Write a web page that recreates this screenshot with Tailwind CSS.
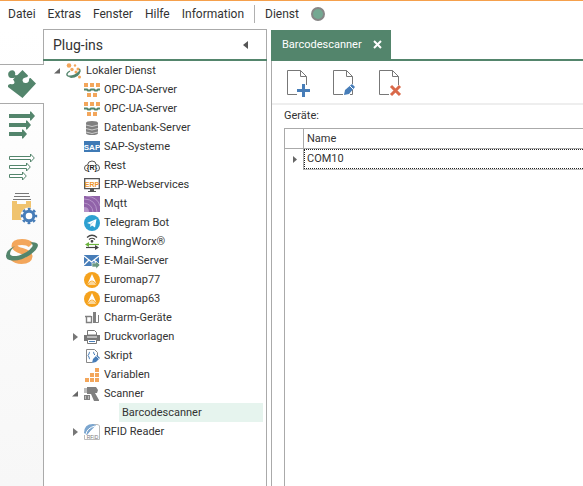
<!DOCTYPE html>
<html lang="de">
<head>
<meta charset="utf-8">
<title>Plug-ins</title>
<script src="https://cdn.jsdelivr.net/npm/@tailwindcss/browser@4"></script>
</head>
<body class="flex min-h-screen flex-col overflow-hidden border-t border-[#f5a04c] bg-white font-[Roboto,'Liberation_Sans',sans-serif] text-[11px] leading-[18px] text-[#333]">
<nav class="flex h-7 shrink-0 items-center gap-3 pb-[2px] pl-2 text-[12px]" aria-label="Hauptmenü">
  <button>Datei</button><button>Extras</button><button>Fenster</button><button>Hilfe</button><button>Information</button>
  <span class="-mx-[2px] h-[18px] w-px bg-[#b0b0b0]"></span>
  <button>Dienst</button>
  <span class="h-[14px] w-[14px] rounded-full border-2 border-[#868686] bg-[#74a892]"></span>
</nav>
<div class="flex flex-1">
  <aside class="flex w-[43px] shrink-0 flex-col bg-linear-to-b from-white to-[#f7f7f7] pt-[35px]">
    <button aria-label="Plug-ins" class="relative z-10 -mr-px flex h-10 items-center justify-center border-y border-[#aaa] bg-white">
      <svg width="28" height="28" viewBox="0 0 28 28" fill="#53856c"><path d="M14.500 0L20 5.500Q20 7.500 17.500 7.500Q14.500 8 14.500 10.500Q15 13.500 18 13Q21 12.500 21 10Q21 7.500 22.500 8L28 13.500 14.500 28 0 17Q-.5 14 2.500 14Q6.500 15 6.500 12.500Q6.500 11 5 9.500L7 7.500Q4 8.500 1.500 7.500Q-.5 5.500 .5 2.500Q2.500-.5 5.500 .5Q8 2 7 5Q9 6 10.500 4Z"/></svg>
    </button>
    <button aria-label="Ausgänge" class="flex h-[42px] items-center justify-center">
      <svg width="26" height="28" viewBox="0 0 26 28" fill="#53856c"><path d="M0 3H21V.5h1L26 5 22 9.500h-1V7H0zM0 12H17V9.500h1L22 14 18 18.500h-1V16H0zM0 21H13V18.500h1L18 23 14 27.500h-1V25H0z"/></svg>
    </button>
    <button aria-label="Eingänge" class="flex h-[42px] items-center justify-center">
      <svg width="26" height="28" viewBox="0 0 26 28" fill="#fff" stroke="#53856c"><path d="M.5 3.500H21.500V1L25.300 5 21.500 9V6.500H.5zM.5 12.500H17.500V10L21.300 14 17.500 18V15.500H.5zM.5 21.500H13.500V19L17.300 23 13.500 27V24.500H.5z"/></svg>
    </button>
    <button aria-label="Konfiguration" class="flex h-[42px] items-center justify-center pl-[6px]">
      <svg width="26" height="32" viewBox="0 0 26 32"><path d="M3 .5H17M2 3.500H18M1 6.500H19" stroke="#777" fill="none"/><path d="M0 8H5V11H14V8H19V27H0z" fill="#f0c36e"/><circle cx="17" cy="23" r="8.500" fill="#fcfcfc"/><circle cx="17" cy="23" r="4.800" fill="#fff" stroke="#477db8" stroke-width="3"/><circle cx="17" cy="23" r="7" fill="none" stroke="#477db8" stroke-width="2.400" stroke-dasharray="2.750 2.748" stroke-dashoffset="1.400"/></svg>
    </button>
    <button aria-label="Dienst" class="flex h-[42px] items-center justify-center">
      <svg width="32" height="27" viewBox="0 0 32 27" fill="none"><path d="M25 7Q22 4 16 4Q8.500 4 8.500 8Q9 11 16 13Q23.500 15 23.500 18.500Q23 23 15.500 23Q10 23 7 20" stroke="#f3a65b" stroke-width="6"/><path d="M9 8Q0 12 0 18Q0 22 6 22.500Q15 23 24 17Q32 11 32 7Q31 3.500 24 4.500Q28 6 26 9Q22 14.500 13 17.500Q5 19 4 16Q4 12 9 8Z" fill="#53856c"/></svg>
    </button>
  </aside>

  <section class="flex w-56 shrink-0 flex-col border-x border-t border-[#aaa]">
    <header class="-mx-px flex h-[31px] shrink-0 items-center justify-between border-b-2 border-[#53856c] pr-[19px] pl-[10px]">
      <h2 class="text-[14px]">Plug-ins</h2>
      <button aria-label="Einklappen"><svg width="5" height="8" viewBox="0 0 5 8" fill="#555"><path d="M5 0V8L0 4z"/></svg></button>
    </header>
    <ul class="pl-1 [&_button]:flex [&_button]:h-[19px] [&_button]:items-center [&_button]:gap-1 [&_button]:whitespace-nowrap [&_svg]:shrink-0">
      <li><button class="pl-[6px]"><svg class="mr-px" width="7" height="7" viewBox="0 0 7 7" fill="#666"><path d="M6 1V6.500H0z"/></svg>
        <svg width="16" height="16" viewBox="0 0 16 16"><g fill="#f3a65b"><circle cx="3" cy="2.500" r="2.300"/><circle cx="9" cy="2.500" r="1.200"/><circle cx="12" cy="6" r="1.500"/><circle cx="6" cy="6.500" r="1.700"/><circle cx="10" cy="9" r="1.500"/><circle cx="13.500" cy="14" r="1.500"/></g><path d="M4 8Q-1 11 2 13Q8 14 13 9Q15 7 13 6" stroke="#53856c" stroke-width="1.300" fill="none"/><path d="M2 13.500Q10 13 15 7.500Q13 15 5 15z" fill="#53856c"/></svg>Lokaler Dienst</button>
      <ul class="pl-9">
        <li><button><svg width="16" height="16" viewBox="0 0 16 16"><path d="M0 1h4v4H0zM6 1h4v4H6zM12 1h4v4h-4zM3 11h4v4H3zM9 11h4v4H9z" fill="#f3a65b"/><path d="M0 7.500h3l1 1h2l1-1h3l1 1h2l1-1h2" stroke="#53856c" stroke-width="2" fill="none"/></svg>OPC-DA-Server</button></li>
        <li><button><svg width="16" height="16" viewBox="0 0 16 16"><path d="M0 1h4v4H0zM6 1h4v4H6zM12 1h4v4h-4zM3 11h4v4H3zM9 11h4v4H9z" fill="#f3a65b"/><path d="M0 7.500h3l1 1h2l1-1h3l1 1h2l1-1h2" stroke="#53856c" stroke-width="2" fill="none"/></svg>OPC-UA-Server</button></li>
        <li><button><svg width="16" height="16" viewBox="0 0 16 16"><path d="M2 3Q2 1 8 1T14 3V13Q14 15 8 15T2 13z" fill="#808080"/><path d="M2 5Q8 8 14 5M2 8.500Q8 11.500 14 8.500M2 12Q8 15 14 12" stroke="#ccc" fill="none"/></svg>Datenbank-Server</button></li>
        <li><button><svg width="16" height="16" viewBox="0 0 16 16"><path d="M0 2h16v11H0z" fill="#3f7ab5"/><text x="8" y="11" text-anchor="middle" fill="#fff" font-size="8" font-weight="bold" font-family="Liberation Sans">SAP</text></svg>SAP-Systeme</button></li>
        <li><button><svg width="16" height="16" viewBox="0 0 16 16"><path d="M3.500 13Q.5 13 .5 10T3.500 7Q4 3 8 3T12 6.500Q15.500 6.500 15.500 10T12.500 13" stroke="#555" fill="none"/><text x="8" y="12" text-anchor="middle" fill="#222" font-size="7" font-weight="bold" font-family="Liberation Sans">{R}</text></svg>Rest</button></li>
        <li><button><svg width="16" height="16" viewBox="0 0 16 16"><path d="M.7 1.700h14.600v10H.7z" fill="#fff" stroke="#555" stroke-width="1.300"/><path d="M6 12h4v2h2v1H4v-1h2z" fill="#555"/><text x="8" y="9.500" text-anchor="middle" fill="#ee962e" font-size="7" font-weight="bold" font-family="Liberation Sans">ERP</text></svg>ERP-Webservices</button></li>
        <li><button><svg width="16" height="16" viewBox="0 0 16 16"><path d="M0 0h16v16H0z" fill="#9163a9"/><path d="M0 3Q12 3 13 16M0 7Q8 8 9 16M2 0Q14 1 16 10" stroke="#b594c8" fill="none"/><path d="M0 11Q5 11 5 16H0z" fill="#b594c8"/></svg>Mqtt</button></li>
        <li><button><svg width="16" height="16" viewBox="0 0 16 16"><circle cx="8" cy="8" r="8" fill="#2da0d1"/><path d="M3 8L12.500 4 11 12.500 8 10.500 6.500 12 6 9z" fill="#fff"/><path d="M6 9l5-3.500-4 4-.5 2.500" fill="#a5d3e8"/></svg>Telegram Bot</button></li>
        <li><button><svg width="16" height="16" viewBox="0 0 16 16" fill="none" stroke="#444" stroke-width="1.200"><path d="M3 3.500Q8-1 13 3.500M5 5.500Q8 3 11 5.500"/><circle cx="8" cy="7.300" r=".8" fill="#444"/><path d="M15 10.500H3" stroke="#6cb33f"/><path d="M5 8v5L1 10.500z" fill="#6cb33f" stroke="none"/><path d="M2 13.500H13"/><path d="M11 11v5l4-2.500z" fill="#444" stroke="none"/></svg>ThingWorx®</button></li>
        <li><button><svg width="16" height="16" viewBox="0 0 16 16"><path d="M0 2h15v11H0z" fill="#477db8"/><path d="M0 3l7.500 6L15 3M0 12l5-5M15 12l-5-5" stroke="#fff" stroke-width="1.300" fill="none"/><path d="M8 10h4V8l4 4-4 4v-2H8z" fill="#6a9983" stroke="#fff" stroke-width=".6"/></svg>E-Mail-Server</button></li>
        <li><button><svg width="16" height="16" viewBox="0 0 16 16"><circle cx="8" cy="8" r="8" fill="#f5a21d"/><path d="M8 2L3 13Q5 9 8 8.500Q11 9 13 13z" fill="#fff"/><path d="M8 9Q5 10 4 13h8Q11 10 8 9" fill="#fbd79a"/></svg>Euromap77</button></li>
        <li><button><svg width="16" height="16" viewBox="0 0 16 16"><circle cx="8" cy="8" r="8" fill="#f5a21d"/><path d="M8 2L3 13Q5 9 8 8.500Q11 9 13 13z" fill="#fff"/><path d="M8 9Q5 10 4 13h8Q11 10 8 9" fill="#fbd79a"/></svg>Euromap63</button></li>
        <li><button><svg width="16" height="16" viewBox="0 0 16 16" fill="none" stroke="#808080"><path d="M1 6.500h6M2.500 7v5.500h5V6" stroke-width="1.400"/><path d="M9 2h3v11H9z" fill="#808080" stroke="none"/><path d="M12 12.500h2.500V5"/></svg>Charm-Geräte</button></li>
        <li><button class="-ml-[11px]"><svg class="mr-[2px]" width="5" height="8" viewBox="0 0 5 8" fill="#777"><path d="M0 0V8L5 4z"/></svg><svg width="16" height="16" viewBox="0 0 16 16"><path d="M0 6h16v6H0z" fill="#777"/><path d="M3.500 6V1.500h7l2 2V6z" fill="#fff" stroke="#777"/><path d="M3.500 10.500h9v4h-9z" fill="#fff" stroke="#777"/><path d="M3 8h10" stroke="#fff"/><path d="M5 12.500h6" stroke="#477db8"/></svg>Druckvorlagen</button></li>
        <li><button><svg width="16" height="16" viewBox="0 0 16 16" fill="none"><path d="M8 14.500H2.500V1.500h8l3 3V8" stroke="#888"/><path d="M6 4Q5 4 5 6L4 7.500 5 9Q5 11 6 11M9 4Q10 4 10 6L11 7" stroke="#477db8"/><path d="M8 15l1-4 4-4 3 3-4 4z" fill="#477db8"/><path d="M12 8l3 3" stroke="#fff" stroke-width=".7"/></svg>Skript</button></li>
        <li><button><svg width="16" height="16" viewBox="0 0 16 16" fill="#f3a65b"><path d="M11 1h4v4h-4zM11 6h4v4h-4zM11 11h4v4h-4zM6 6h4v4H6zM6 11h4v4H6zM1 11h4v4H1z"/></svg>Variablen</button></li>
        <li><button class="-ml-3"><svg class="mr-px" width="7" height="7" viewBox="0 0 7 7" fill="#666"><path d="M6 1V6.500H0z"/></svg><svg width="16" height="16" viewBox="0 0 16 16" fill="#808080"><path d="M3 1h9l2 3-1 3h-2l4 7v1h-5L7 8H3z"/><path d="M0 2h3v5H0z" fill="#bbb"/><path d="M0 9h6v5H0z"/><path d="M1.500 10v3M4.500 10v3" stroke="#bbb"/></svg>Scanner</button>
          <ul class="mr-[3px] pl-[35px]"><li><button class="w-full bg-[#e6f4ee] pl-[3px]">Barcodescanner</button></li></ul></li>
        <li><button class="-ml-[11px]"><svg class="mr-[2px]" width="5" height="8" viewBox="0 0 5 8" fill="#777"><path d="M0 0V8L5 4z"/></svg><svg width="16" height="16" viewBox="0 0 16 16"><path d="M.5 11v4.500h15V2Q15 .5 13 .5H8" stroke="#bbb" fill="none"/><path d="M0 9Q0 0 9 0L12 1 3 11z" fill="#7ca6cf"/><path d="M2 10Q3 4 11 2M5 10Q6 6 12 4" stroke="#fff" fill="none"/><text x="8.500" y="14.500" text-anchor="middle" fill="#777" font-size="5" font-family="Liberation Sans">RFID</text></svg>RFID Reader</button></li>
      </ul></li>
    </ul>
  </section>

  <main class="ml-1 flex min-w-0 flex-1 flex-col pt-px">
    <div class="flex h-[31px] shrink-0 border-b-2 border-[#53856c]">
      <div class="flex w-[120px] items-center justify-between bg-[#53856c] pr-[9px] pl-[11px] text-white"><span>Barcodescanner</span><button aria-label="Schließen"><svg width="9" height="9" viewBox="0 0 9 9" stroke="#fff" stroke-width="2"><path d="M1 1l7 7M8 1L1 8"/></svg></button></div>
    </div>
    <div class="flex flex-1 flex-col border-l border-[#aaa]">
      <div class="flex h-11 shrink-0 items-center gap-[22px] border-b-2 border-[#eee] pt-1 pl-[15px]" role="toolbar">
        <button aria-label="Hinzufügen"><svg width="24" height="28" viewBox="0 0 24 28" fill="none"><path d="M10 24.500H.5V.5h13l6 6V15M13.500 .5v6h6" stroke="#777"/><path d="M16.500 14v13M10 20.500h13" stroke="#477db8" stroke-width="3"/></svg></button>
        <button aria-label="Bearbeiten"><svg width="24" height="28" viewBox="0 0 24 28" fill="none"><path d="M10 24.500H.5V.5h13l6 6V14M13.500 .5v6h6M19.500 20v4.500H17" stroke="#777"/><path d="M11 25l1-5 7-6 3 3-6 7z" fill="#477db8"/><path d="M17 16l3 3" stroke="#fff"/></svg></button>
        <button aria-label="Löschen"><svg width="24" height="28" viewBox="0 0 24 28" fill="none"><path d="M10 24.500H.5V.5h13l6 6V15M13.500 .5v6h6" stroke="#777"/><path d="M12 16l9 9M21 16l-9 9" stroke="#d9694a" stroke-width="3"/></svg></button>
      </div>
      <div class="flex flex-1 flex-col pt-[2px] pl-3">
        <h3 id="geraete" class="h-[21px]">Geräte:</h3>
        <div class="flex-1 border-t border-l border-[#aaa]">
          <table aria-labelledby="geraete" class="w-full table-fixed border-separate border-spacing-0 text-left">
            <thead><tr class="h-5"><th aria-label="Auswahl" class="w-[19px] border-r border-b border-[#aaa] p-0"></th><th class="border-b border-[#aaa] p-0 pl-[3px] font-normal">Name</th></tr></thead>
            <tbody><tr><td class="border-r border-[#aaa] p-0"><svg class="ml-2" width="4" height="7" viewBox="0 0 4 7" fill="#666"><path d="M0 0V7L4 3.500z"/></svg></td><td class="border-b border-[#bbb] p-0"><div class="border-y border-l border-dotted border-[#222] pl-[2px]">COM10</div></td></tr></tbody>
          </table>
        </div>
      </div>
    </div>
  </main>
</div>
</body>
</html>
